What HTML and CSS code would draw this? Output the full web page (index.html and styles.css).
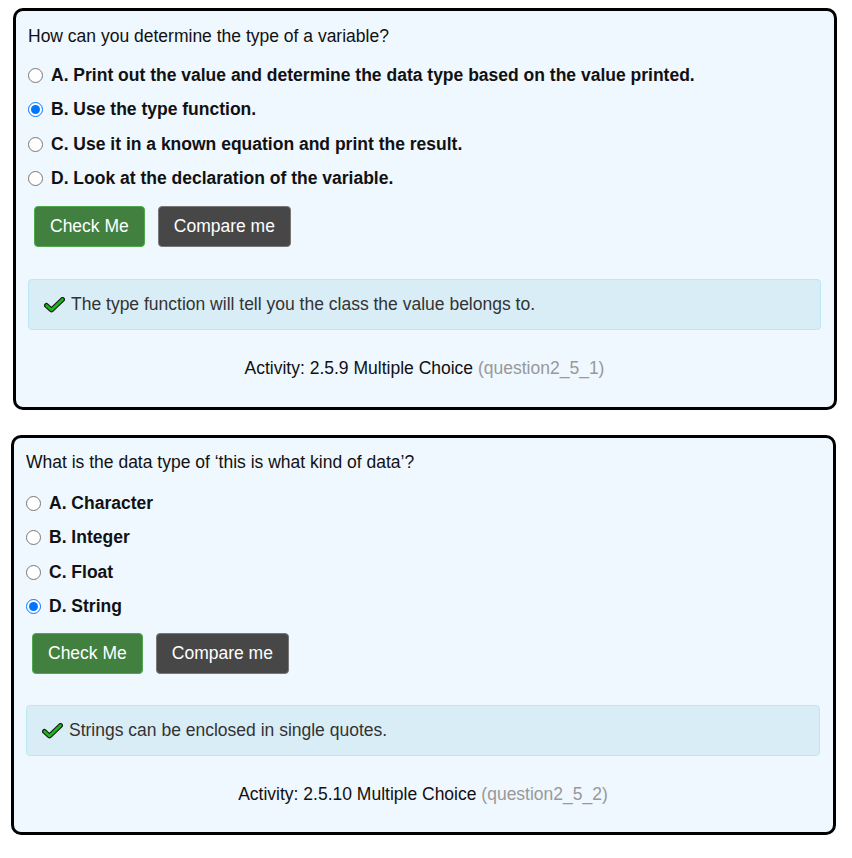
FILE: index.html
```html
<!DOCTYPE html>
<html>
<head>
<meta charset="utf-8">
<link rel="stylesheet" href="styles.css">
</head>
<body>
<div class="card card-first">
  <p class="question">How can you determine the type of a variable?</p>
  <ul class="options">
    <li class="option"><input type="radio" name="q1"><label>A. Print out the value and determine the data type based on the value printed.</label></li>
    <li class="option"><input type="radio" name="q1" checked><label>B. Use the type function.</label></li>
    <li class="option"><input type="radio" name="q1"><label>C. Use it in a known equation and print the result.</label></li>
    <li class="option"><input type="radio" name="q1"><label>D. Look at the declaration of the variable.</label></li>
  </ul>
  <div class="buttons">
    <button class="btn btn-check">Check Me</button>
    <button class="btn btn-compare">Compare me</button>
  </div>
  <div class="feedback">
    <svg class="tick" width="21" height="16" viewBox="0 0 21 16"><path d="M2.5 8.5 L7.5 13 L18.5 2.5" fill="none" stroke="#1a1a1a" stroke-width="5" stroke-linecap="round" stroke-linejoin="round"/><path d="M2.5 8.5 L7.5 13 L18.5 2.5" fill="none" stroke="#22b222" stroke-width="2.6" stroke-linecap="round" stroke-linejoin="round"/></svg>
    <span>The type function will tell you the class the value belongs to.</span>
  </div>
  <p class="activity">Activity: 2.5.9 Multiple Choice <span class="qid">(question2_5_1)</span></p>
</div>
<div class="card card-second">
  <p class="question">What is the data type of ‘this is what kind of data’?</p>
  <ul class="options">
    <li class="option"><input type="radio" name="q2"><label>A. Character</label></li>
    <li class="option"><input type="radio" name="q2"><label>B. Integer</label></li>
    <li class="option"><input type="radio" name="q2"><label>C. Float</label></li>
    <li class="option"><input type="radio" name="q2" checked><label>D. String</label></li>
  </ul>
  <div class="buttons">
    <button class="btn btn-check">Check Me</button>
    <button class="btn btn-compare">Compare me</button>
  </div>
  <div class="feedback">
    <svg class="tick" width="21" height="16" viewBox="0 0 21 16"><path d="M2.5 8.5 L7.5 13 L18.5 2.5" fill="none" stroke="#1a1a1a" stroke-width="5" stroke-linecap="round" stroke-linejoin="round"/><path d="M2.5 8.5 L7.5 13 L18.5 2.5" fill="none" stroke="#22b222" stroke-width="2.6" stroke-linecap="round" stroke-linejoin="round"/></svg>
    <span>Strings can be enclosed in single quotes.</span>
  </div>
  <p class="activity">Activity: 2.5.10 Multiple Choice <span class="qid">(question2_5_2)</span></p>
</div>
</body>
</html>
```
FILE: styles.css
```css
* { box-sizing: border-box; }
body {
  margin: 0;
  padding-top: 8px;
  background: #ffffff;
  font-family: "Liberation Sans", Arial, sans-serif;
  font-size: 17.5px;
  color: #111;
}
.card {
  background: #eff7ff;
  border: 3px solid #000;
  border-radius: 10px;
  padding: 14px 13px 28px 12px;
}
.card-first { margin-left: 13px; width: 824px; }
.card-second {
  margin-left: 11px;
  width: 825px;
  margin-top: 25px;
  padding-top: 13px;
  padding-bottom: 27px;
}
.question {
  margin: 0 0 11px 0;
  line-height: 22px;
}
.card-second .question { margin-bottom: 13px; }
.options {
  list-style: none;
  margin: 0;
  padding: 0;
}
.option {
  display: flex;
  align-items: center;
  height: 34.5px;
  font-weight: bold;
}
.option input {
  margin: 0 8px 0 0;
  width: 15px;
  height: 15px;
}
.buttons {
  display: flex;
  gap: 13px;
  margin: 10px 0 0 6px;
}
.card-second .buttons { margin-top: 9px; }
.btn {
  font-family: "Liberation Sans", Arial, sans-serif;
  font-size: 17.5px;
  white-space: nowrap;
  height: 41px;
  padding: 0 15px;
  border-radius: 4px;
  color: #fff;
  border: 1px solid transparent;
}
.btn-check { background: #42803f; border-color: #4fa84c; }
.btn-compare { background: #474747; border-color: #777; }
.feedback {
  margin-top: 32px;
  height: 51px;
  background: #d9edf7;
  border: 1px solid #bce8f1;
  border-radius: 4px;
  display: flex;
  align-items: center;
  padding-left: 15px;
  color: #333;
  gap: 6px;
}
.card-second .feedback { margin-top: 31px; }
.tick { display: block; }
.activity {
  margin: 27px 0 0 0;
  text-align: center;
  line-height: 22px;
  color: #111;
}
.qid { color: #999; }
```
